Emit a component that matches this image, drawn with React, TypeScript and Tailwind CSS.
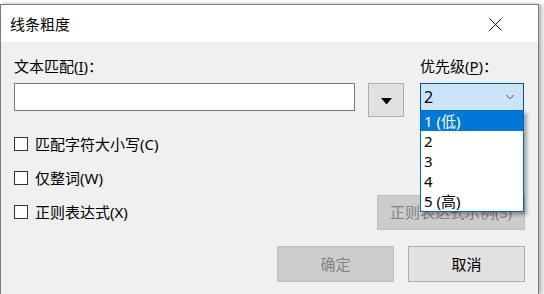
import { ChevronDown } from 'lucide-react'

const font = { fontFamily: '"Noto Sans", "Noto Sans CJK SC", sans-serif' }

function CheckRow({ label, accel }: { label: string; accel: string }) {
  return (
    <div className="flex h-[20px] items-center gap-[7px]">
      <span className="h-[14px] w-[14px] border border-[#333333] bg-white" />
      <span className="text-[15px] leading-[20px] text-black">
        {label}({accel})
      </span>
    </div>
  )
}

export default function App() {
  const items = ['1 (低)', '2', '3', '4', '5 (高)']
  return (
    <div className="relative h-[294px] w-[544px] overflow-hidden bg-[#f2f2f2] pt-[4px]" style={font}>
      <div className="absolute left-0 right-0 top-0 h-[4px] bg-white" />
      <div className="relative flex h-[290px] w-[539px] flex-col border-x border-t border-[#7a7a7a] shadow-[2px_0_4px_rgba(0,0,0,0.3)]">
        {/* title bar */}
        <div className="flex h-[37px] items-center justify-between bg-white pl-[9px] pr-[36px]">
          <span className="text-[15px] leading-[20px] text-black">线条粗度</span>
          <svg width="13" height="13" viewBox="0 0 13 13" className="mt-[1px]">
            <path d="M0.5 0.5 L12.5 12.5 M12.5 0.5 L0.5 12.5" stroke="#111" strokeWidth="1" />
          </svg>
        </div>

        {/* body */}
        <div className="flex flex-1 flex-col bg-[#f0f0f0] px-[13px] pt-[14px]">
          <div className="flex h-[20px] text-[15px] leading-[20px] text-black">
            <span className="w-[406px]">
              文本匹配(<span className="underline underline-offset-2">I</span>)：
            </span>
            <span>
              优先级(<span className="underline underline-offset-2">P</span>)：
            </span>
          </div>

          <div className="mt-[7px] flex h-[34px] items-start">
            <div className="h-[28px] w-[341px] border border-[#7a7a7a] bg-white" />
            <div className="ml-[13px] flex h-[34px] w-[36px] items-center justify-center border border-[#adadad] bg-[#e1e1e1]">
              <svg width="11" height="7" viewBox="0 0 11 7" className="mt-[2px]">
                <path d="M0 0 L11 0 L5.5 6.5 Z" fill="#000" />
              </svg>
            </div>
            <div className="relative ml-[16px] w-[104px]">
              <div className="flex h-[28px] items-center justify-between border border-[#005499] bg-[#cce4f7] pl-[3px] pr-[6px]">
                <span className="text-[16px] leading-[20px] text-black">2</span>
                <ChevronDown size={14} strokeWidth={1.4} className="text-[#333]" />
              </div>
              <div className="absolute left-0 top-[27px] z-10 w-[104px] border border-[#0067c0] bg-white shadow-[3px_3px_3px_rgba(0,0,0,0.3)]">
                {items.map((t, i) => (
                  <div
                    key={t}
                    className={
                      i === 0
                        ? 'h-[20px] bg-[#0078d7] pl-[3px] text-[15px] leading-[20px] text-white'
                        : 'h-[20px] pl-[3px] text-[15px] leading-[20px] text-black'
                    }
                  >
                    {t}
                  </div>
                ))}
              </div>
            </div>
          </div>

          <div className="mt-[17px] flex h-[96px] justify-between">
            <div className="flex flex-col gap-[14px]">
              <CheckRow label="匹配字符大小写" accel="C" />
              <CheckRow label="仅整词" accel="W" />
              <CheckRow label="正则表达式" accel="X" />
            </div>
            <div className="pt-[61px]">
              <div className="flex h-[35px] w-[148px] items-center justify-center border border-[#bfbfbf] bg-[#cccccc] text-[15px] text-[#838383]">
                正则表达式示例(S)
              </div>
            </div>
          </div>

          <div className="mt-[16px] flex justify-end gap-[14px]">
            <div className="flex h-[36px] w-[117px] items-center justify-center border border-[#bfbfbf] bg-[#cccccc] text-[15px] text-[#838383]">
              确定
            </div>
            <div className="flex h-[36px] w-[117px] items-center justify-center border border-[#adadad] bg-[#e1e1e1] text-[15px] text-black">
              取消
            </div>
          </div>
        </div>
      </div>
    </div>
  )
}
